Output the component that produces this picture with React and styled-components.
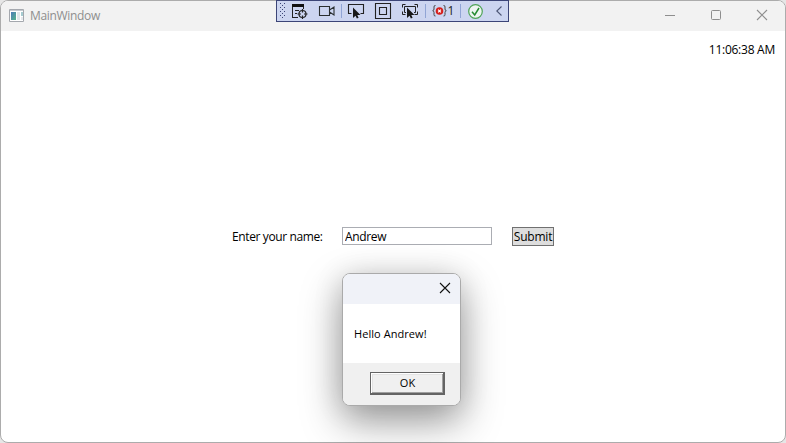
import React, { useState } from "react";
import styled, { createGlobalStyle } from "styled-components";

const GlobalStyle = createGlobalStyle`
  * { box-sizing: border-box; }
  body { margin: 0; background: #e6e6e6; overflow: hidden; }
  button, input { font: inherit; letter-spacing: inherit; color: inherit; }
`;

const Window = styled.main`
  position: relative;
  display: flex;
  flex-direction: column;
  width: 786px;
  height: 443px;
  border: 1px solid #acacac;
  border-radius: 8px;
  background: #fff;
  color: #000;
  font: 12px/16px "Open Sans", "Noto Sans", sans-serif;
`;

const TitleBar = styled.header`
  display: flex;
  align-items: center;
  flex: 0 0 30px;
  padding-left: 8px;
  border-radius: 7px 7px 0 0;
  background: #f2f2f2;
  color: #8e8e8e;
`;

const Title = styled.h1`
  flex: 1;
  margin: 0 0 0 5px;
  font: inherit;
  letter-spacing: -0.33px;
`;

const Caption = styled.button`
  display: grid;
  place-items: center;
  width: 46px;
  height: 28px;
  padding: 0;
  border: 0;
  background: transparent;
`;

const Glyph = styled.svg`
  display: block;
  flex: none;
  overflow: visible;
`;

const Clock = styled.time`
  align-self: flex-end;
  margin: 11px 10px 0 0;
  letter-spacing: -0.25px;
`;

const Form = styled.form`
  display: flex;
  align-items: center;
  height: 20px;
  margin: 168px 0 0 231px;
`;

const Label = styled.label`
  width: 110px;
  padding-top: 1px;
  letter-spacing: -0.38px;
  white-space: nowrap;
`;

const TextBox = styled.input`
  width: 150px;
  height: 18px;
  padding: 0 2px;
  border: 1px solid #abadb3;
  outline: 0;
  background: #fff;
  letter-spacing: -0.35px;
`;

const Submit = styled.button`
  width: 42px;
  height: 19px;
  margin-left: 20px;
  padding: 1px 0 0;
  border: 1px solid #707070;
  background: #ddd;
  line-height: 16px;
  letter-spacing: -0.2px;
`;

const DebugBar = styled.nav`
  position: absolute;
  top: -1px;
  left: 275px;
  display: flex;
  align-items: center;
  width: 233px;
  height: 22px;
  border: 1px solid #3c4577;
  background: #ccd5f0;
`;

const Tool = styled.button`
  display: flex;
  align-items: center;
  justify-content: center;
  width: ${(p) => p.$width}px;
  height: 20px;
  padding: 0;
  border: 0;
  background: transparent;
  color: #1e1e1e;
`;

const Divider = styled.i`
  width: 1px;
  height: 14px;
  background: #91a5d5;
`;

const Count = styled.span`
  margin-left: 1px;
`;

const Dialog = styled.section`
  position: absolute;
  left: 341px;
  top: 272px;
  display: flex;
  flex-direction: column;
  width: 119px;
  height: 133px;
  overflow: hidden;
  border: 1px solid #aaa;
  border-radius: 8px;
  background: #fff;
  box-shadow: 0 16px 40px rgba(0, 0, 0, 0.38), 0 2px 30px rgba(0, 0, 0, 0.12);
  font-size: 11px;
`;

const DialogBar = styled.header`
  display: flex;
  justify-content: flex-end;
  align-items: center;
  flex: 0 0 30px;
  padding: 0 10px 2px 0;
  background: #f0f2f8;
`;

const CloseButton = styled.button`
  padding: 0;
  border: 0;
  background: transparent;
`;

const Message = styled.p`
  flex: 1;
  margin: 0;
  padding: 22px 0 0 11px;
  letter-spacing: 0.06px;
  white-space: nowrap;
`;

const DialogFooter = styled.footer`
  flex: 0 0 42px;
  padding: 9px 0 0 27px;
  background: #f0f0f0;
`;

const OkButton = styled.button`
  display: block;
  width: 75px;
  height: 23px;
  padding: 0 0 1px 1px;
  border: 1px solid #646464;
  border-right-width: 2px;
  border-bottom-width: 2px;
  box-shadow: inset 1px 1px #fff, inset -1px -1px #a0a0a0, inset 2px 2px #e3e3e3;
  background: #f0f0f0;
  line-height: 18px;
`;

const AppIcon = () => (
  <Glyph width="16" height="16" viewBox="0 0 16 16">
    <defs>
      <linearGradient id="pane" x1="0" y1="0" x2="1" y2="1">
        <stop offset="0" stopColor="#4c7bb8" />
        <stop offset="1" stopColor="#58b58b" />
      </linearGradient>
    </defs>
    <path d="M.5 1.5h14v12H.5z" fill="#fff" stroke="#a4a8ae" />
    <path d="M1 2.5h13" stroke="#c6cad0" />
    <path d="M2 4h5v8H2z" fill="url(#pane)" />
    <path d="M8 4h3v8H8z" fill="#e0e7e9" />
    <path d="M12 4h2v4h-2z" fill="#a6cbd0" />
    <path d="M12 9h2v3h-2z" fill="#e7e9ed" />
  </Glyph>
);

const Cross = ({ size = 10, color = "#8e8e8e" }) => (
  <Glyph width={size} height={size} viewBox="0 0 10 10">
    <path d="M0 0 10 10M10 0 0 10" stroke={color} strokeWidth="1.1" fill="none" />
  </Glyph>
);

const Grip = () => (
  <Glyph width="8" height="20" viewBox="0 0 8 20">
    {Array.from({ length: 4 }, (_, i) => (
      <path
        key={i}
        d={`M1 ${2 + i * 4}h1v1H1zM5 ${2 + i * 4}h1v1H5zM3 ${4 + i * 4}h1v1H3z`}
        fill="#3c4577"
        shapeRendering="crispEdges"
      />
    ))}
  </Glyph>
);

const TreeIcon = () => (
  <Glyph width="17" height="17" viewBox="0 0 17 17" fill="none" stroke="#222">
    <path d="M0 1h12v3H0z" fill="#111" stroke="none" />
    <path d="M.5 4v11M11.5 4v2M3 7.5h4M3 10.5h2M0 14.5h6" />
    <circle cx="10.5" cy="11" r="3.5" strokeWidth="1.2" />
    <path d="M10.5 6v3.5M10.5 12.5V16M5.5 11H9M12 11h3.5" strokeWidth="1.2" />
  </Glyph>
);

const CameraIcon = () => (
  <Glyph width="17" height="12" viewBox="0 0 17 12" fill="none" stroke="#2a2f30">
    <path d="M.5 1.5h10v9H.5zM10.5 5l4.5-3v8l-4.5-3" strokeWidth="1.1" />
  </Glyph>
);

const Pointer = () => (
  <path d="M5 4.5v10.5l2.5-2.3 1.4 2.9 1.7-.8-1.3-2.9h3.2z" fill="#181818" stroke="none" />
);

const SelectIcon = () => (
  <Glyph width="17" height="17" viewBox="0 0 17 17" fill="none" stroke="#222">
    <path d="M3.5 10.5h-3v-9h15v9h-3" strokeWidth="1.1" />
    <Pointer />
  </Glyph>
);

const LayoutIcon = () => (
  <Glyph width="16" height="16" viewBox="0 0 16 16" fill="none" stroke="#222">
    <path d="M.5.5h15v15H.5zM4.5 4.5h7v7h-7z" strokeWidth="1.1" />
  </Glyph>
);

const FocusIcon = () => (
  <Glyph width="17" height="17" viewBox="0 0 17 17" fill="none" stroke="#222">
    <path d="M.5 4.5v-3h3M12.5 1.5h3v3M.5 8.5v3h3M15.5 8.5v3h-3M4 9.5H2.5v-6h11v6H12" />
    <Pointer />
  </Glyph>
);

const BindingIcon = () => (
  <Glyph width="15" height="12" viewBox="0 0 15 12" fill="none">
    <path
      d="M3.5.5H3Q2 .5 2 2v2Q2 5.5.7 5.7 2 6 2 7.5v2Q2 11 3 11h.5M11.5.5h.5q1 0 1 1.5v2q0 1.5 1.3 1.7Q13 6 13 7.5v2q0 1.5-1 1.5h-.5"
      stroke="#444"
    />
    <circle cx="7.5" cy="6" r="3.8" fill="#d5201c" />
    <path d="m6.1 4.6 2.8 2.8m0-2.8L6.1 7.4" stroke="#fff" strokeWidth="1.2" />
  </Glyph>
);

const CheckIcon = () => (
  <Glyph width="15" height="15" viewBox="0 0 15 15" fill="none">
    <circle cx="7.5" cy="7.5" r="6.8" fill="#eef5f2" stroke="#4fa457" strokeWidth="1.2" />
    <path d="m4 7.8 2.7 3.2L11 4" stroke="#258b32" strokeWidth="1.5" />
  </Glyph>
);

const ChevronIcon = () => (
  <Glyph width="6" height="10" viewBox="0 0 6 10" fill="none">
    <path d="M5.5.5.8 5l4.7 4.5" stroke="#4c5575" strokeWidth="1.1" />
  </Glyph>
);

const DebugToolbar = () => (
  <DebugBar aria-label="Debug tools">
    <Tool $width={11}><Grip /></Tool>
    <Tool $width={25}><TreeIcon /></Tool>
    <Tool $width={28}><CameraIcon /></Tool>
    <Divider />
    <Tool $width={29}><SelectIcon /></Tool>
    <Tool $width={24}><LayoutIcon /></Tool>
    <Tool $width={30}><FocusIcon /></Tool>
    <Divider />
    <Tool $width={34}><BindingIcon /><Count>1</Count></Tool>
    <Divider />
    <Tool $width={28}><CheckIcon /></Tool>
    <Tool $width={19}><ChevronIcon /></Tool>
  </DebugBar>
);

export default function App() {
  const [name, setName] = useState("Andrew");
  const [open, setOpen] = useState(true);
  return (
    <>
      <GlobalStyle />
      <Window>
        <TitleBar>
          <AppIcon />
          <Title>MainWindow</Title>
          <Caption aria-label="Minimize">
            <Glyph width="10" height="10"><path d="M0 4.5h10" stroke="#8e8e8e" /></Glyph>
          </Caption>
          <Caption aria-label="Maximize">
            <Glyph width="10" height="10"><rect x=".5" y="-.5" width="9" height="9" rx="1" fill="none" stroke="#8e8e8e" /></Glyph>
          </Caption>
          <Caption aria-label="Close"><Glyph width="10" height="10" viewBox="0 1 10 10"><path d="M0 0 10 10M10 0 0 10" stroke="#8e8e8e" strokeWidth="1.1" /></Glyph></Caption>
        </TitleBar>
        <Clock>11:06:38 AM</Clock>
        <Form onSubmit={(e) => { e.preventDefault(); setOpen(true); }}>
          <Label htmlFor="name">Enter your name:</Label>
          <TextBox id="name" value={name} onChange={(e) => setName(e.target.value)} />
          <Submit>Submit</Submit>
        </Form>
        <DebugToolbar />
        {open && (
          <Dialog role="dialog">
            <DialogBar>
              <CloseButton aria-label="Close" onClick={() => setOpen(false)}><Cross color="#111" /></CloseButton>
            </DialogBar>
            <Message>Hello {name}!</Message>
            <DialogFooter><OkButton onClick={() => setOpen(false)}>OK</OkButton></DialogFooter>
          </Dialog>
        )}
      </Window>
    </>
  );
}
